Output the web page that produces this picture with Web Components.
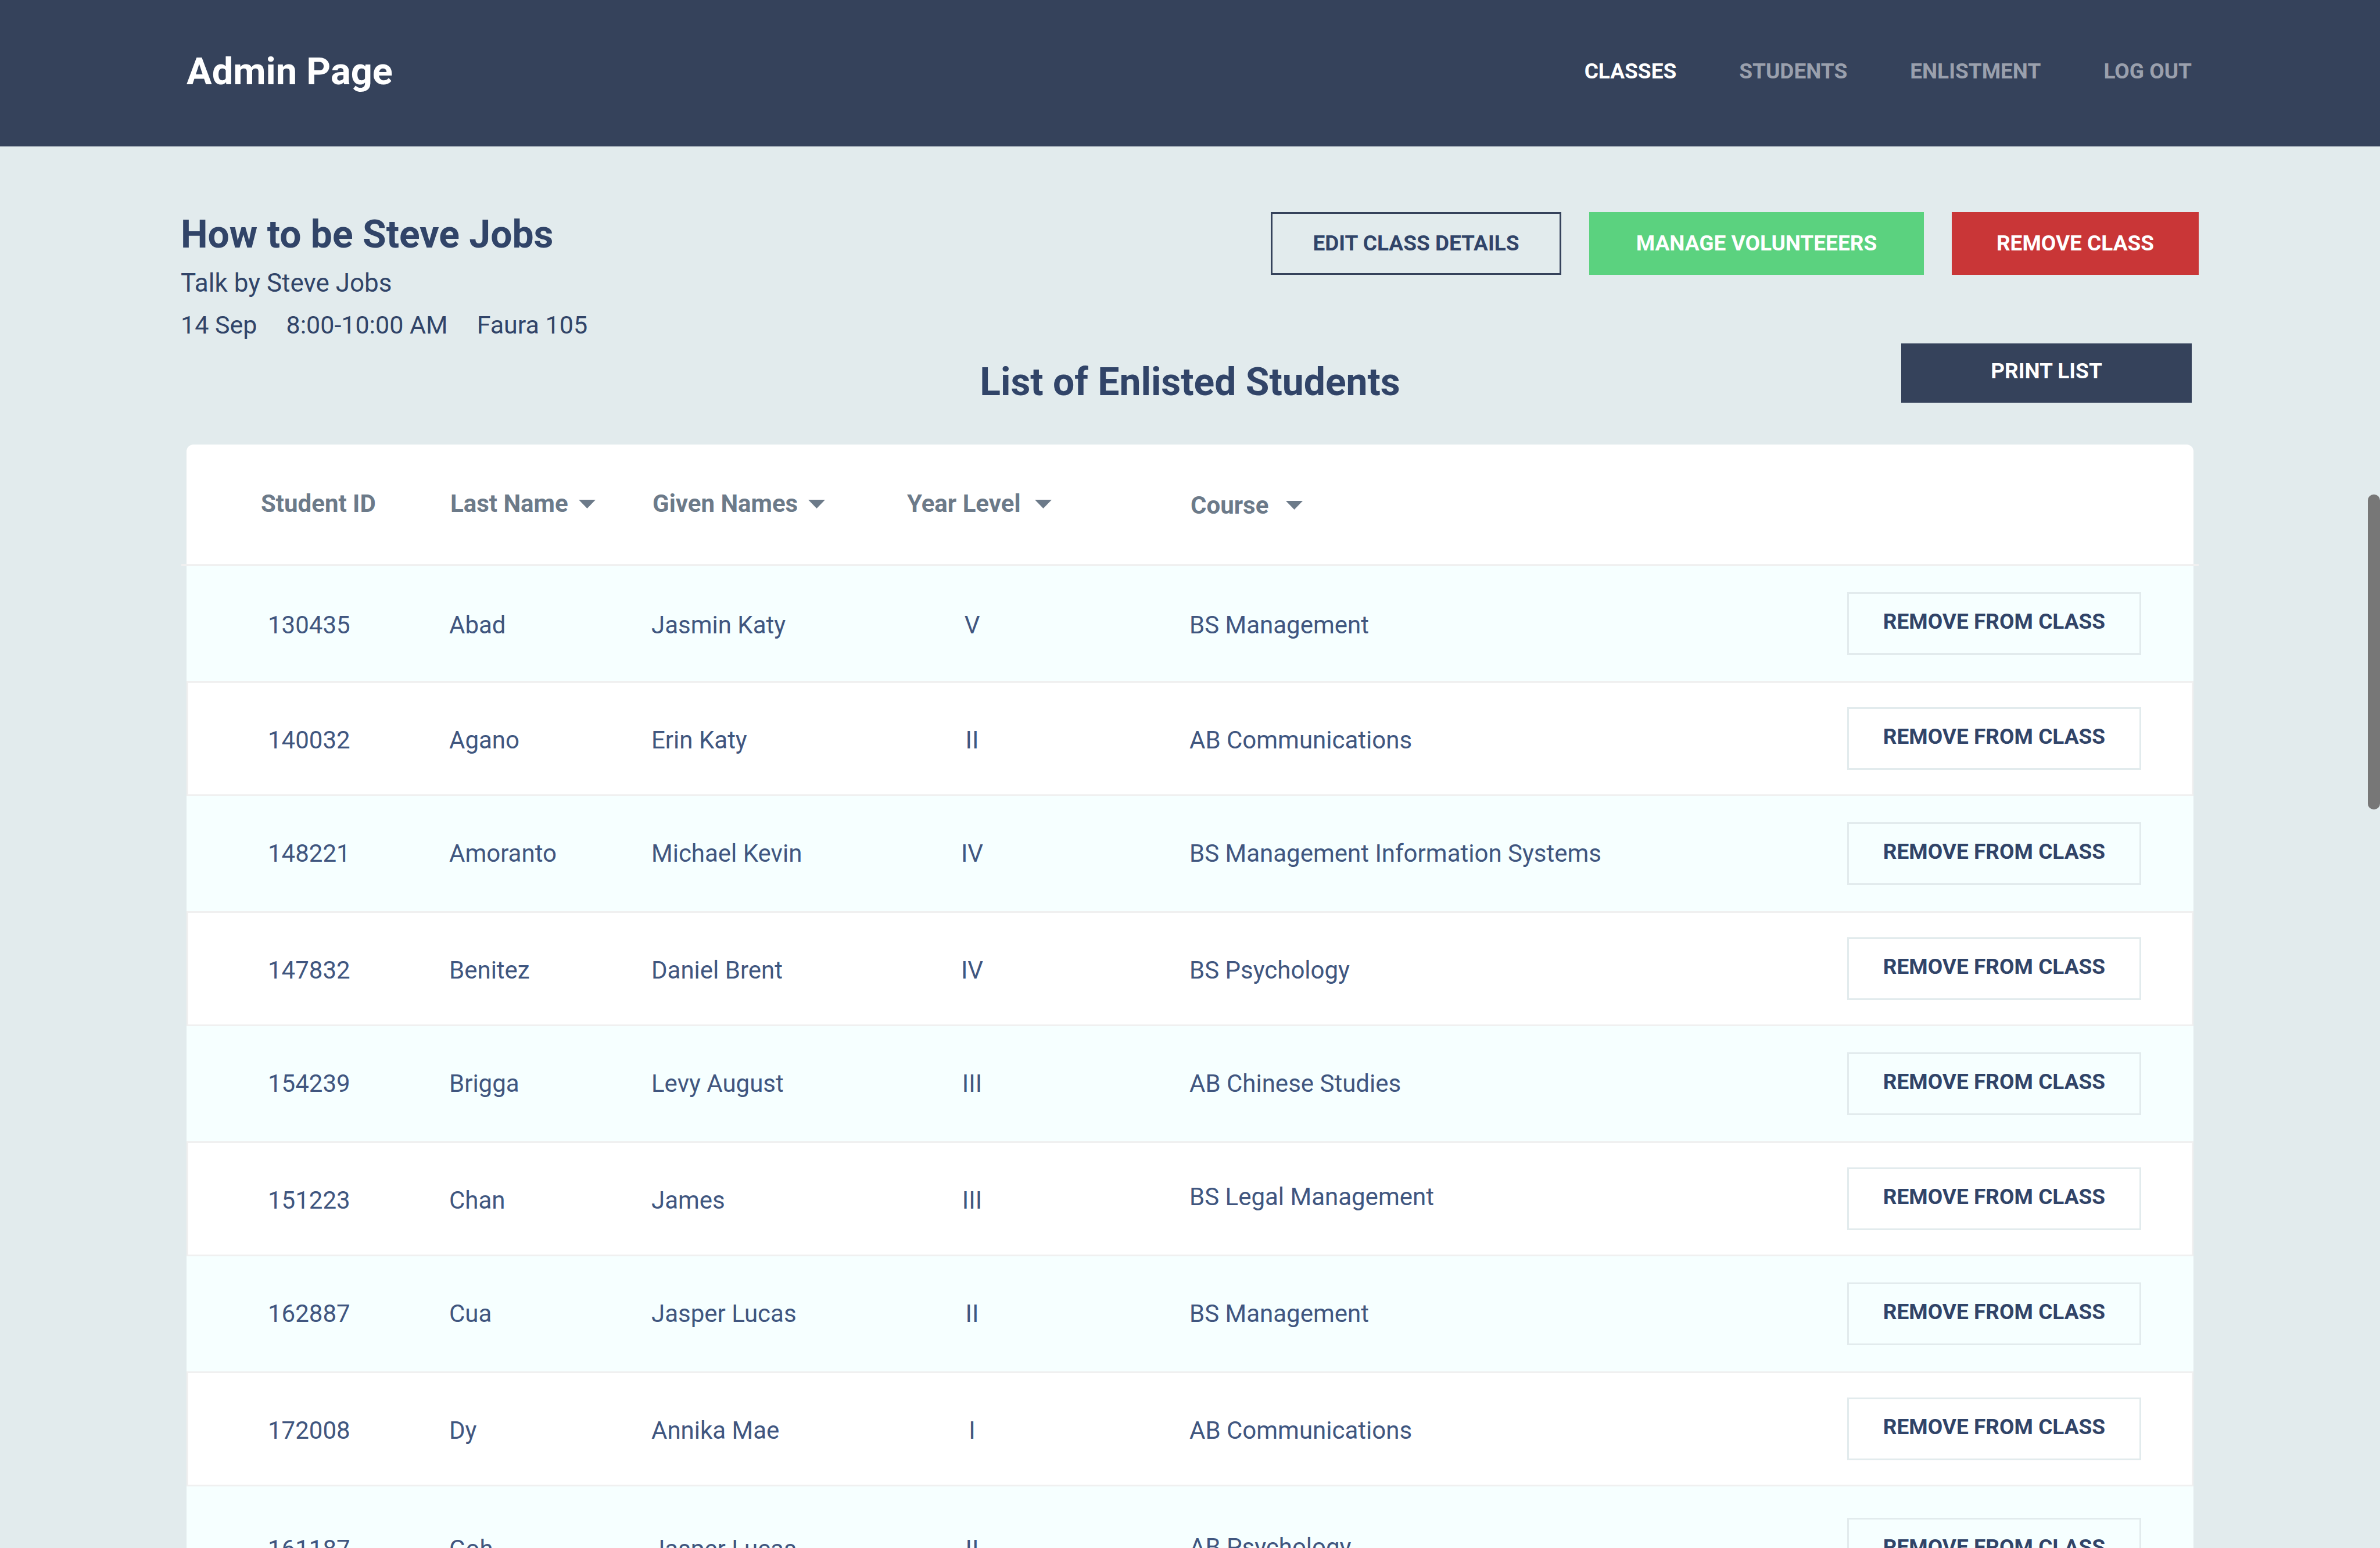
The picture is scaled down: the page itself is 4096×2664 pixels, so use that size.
<!DOCTYPE html>
<html lang="en">
<head>
<meta charset="utf-8">
<title>Admin Page</title>
<style>
  :root {
    --navy: #35425b;
    --ink: #314468;
    --cell: #40567f;
    --muted: #6c7a89;
    --page: #e2ebed;
    --line: #f0f0f0;
    --tint: #f6ffff;
    --green: #5bd27f;
    --red: #c93637;
    scrollbar-width: none;
  }
  body {
    margin: 0;
    background: var(--page);
    color: var(--ink);
    font-family: Roboto, "Liberation Sans", sans-serif;
    font-size: 42px;
  }
</style>
</head>
<body>
<admin-header>
  <span slot="brand">Admin Page</span>
  <nav-link active>CLASSES</nav-link>
  <nav-link>STUDENTS</nav-link>
  <nav-link>ENLISTMENT</nav-link>
  <nav-link>LOG OUT</nav-link>
</admin-header>
<main>
  <class-summary>
    <span slot="title">How to be Steve Jobs</span>
    <span slot="speaker">Talk by Steve Jobs</span>
    <span slot="when">14 Sep</span>
    <span slot="when">8:00-10:00 AM</span>
    <span slot="when">Faura 105</span>
    <action-button slot="actions" kind="outline">EDIT CLASS DETAILS</action-button>
    <action-button slot="actions" kind="go">MANAGE VOLUNTEEERS</action-button>
    <action-button slot="actions" kind="danger">REMOVE CLASS</action-button>
  </class-summary>
  <list-heading>
    <span slot="title">List of Enlisted Students</span>
    <action-button kind="solid">PRINT LIST</action-button>
  </list-heading>
  <student-table></student-table>
</main>
<scroll-thumb></scroll-thumb>

<script>
  const define = (name, html, setup) => {
    const template = document.createElement('template');
    template.innerHTML = html;
    customElements.define(name, class extends HTMLElement {
      constructor() {
        super();
        this.attachShadow({ mode: 'open' }).append(template.content.cloneNode(true));
        if (setup) setup(this.shadowRoot);
      }
    });
  };

  define('action-button', `
    <style>
      :host { display: block; }
      button {
        box-sizing: border-box;
        width: 100%;
        height: 108px;
        padding: 0;
        border: 0;
        font: 700 37px/48px Roboto, "Liberation Sans", sans-serif;
        color: #fff;
        white-space: nowrap;
        cursor: pointer;
      }
      :host([kind="outline"]) button { width: 500px; border: 3px solid var(--navy); background: transparent; color: var(--ink); }
      :host([kind="go"]) button { width: 576px; background: var(--green); }
      :host([kind="danger"]) button { width: 425px; background: var(--red); }
      :host([kind="solid"]) button { width: 500px; height: 102px; padding: 0 0 6px; background: var(--navy); }
      :host([kind="quiet"]) button { padding: 0 0 6px; border: 3px solid var(--page); background: transparent; color: var(--ink); }
    </style>
    <button type="button"><slot></slot></button>`);

  define('nav-link', `
    <style>
      :host { display: block; }
      a { display: block; color: rgb(255 255 255 / 50%); font-weight: 700; font-size: 37px; line-height: 48px; text-decoration: none; }
      :host([active]) a { color: #fff; }
    </style>
    <a href="#"><slot></slot></a>`);

  define('admin-header', `
    <style>
      :host { display: block; background: var(--navy); color: #fff; }
      header {
        box-sizing: border-box;
        height: 252px;
        padding: 0 324px 6px 321px;
        display: flex;
        align-items: center;
        justify-content: space-between;
      }
      .brand { font-weight: 700; font-size: 65px; line-height: 78px; }
      nav { display: flex; gap: 108px; }
    </style>
    <header>
      <div class="brand"><slot name="brand"></slot></div>
      <nav aria-label="Main"><slot></slot></nav>
    </header>`);

  define('class-summary', `
    <style>
      :host { display: block; }
      section { display: flex; justify-content: space-between; padding: 113px 312px 0 311px; }
      h1 { margin: 0 0 12px; font-weight: 700; font-size: 66px; line-height: 78px; }
      p { margin: 0 0 8px; font-size: 44px; line-height: 64px; }
      .when { display: flex; gap: 50px; margin: 0; font-size: 43px; }
      .actions { display: flex; gap: 48px; align-items: flex-start; }
    </style>
    <section>
      <div>
        <h1><slot name="title"></slot></h1>
        <p><slot name="speaker"></slot></p>
        <p class="when"><slot name="when"></slot></p>
      </div>
      <div class="actions"><slot name="actions"></slot></div>
    </section>`);

  define('list-heading', `
    <style>
      :host { display: block; }
      div {
        display: grid;
        grid-template-columns: 1fr auto 1fr;
        align-items: start;
        padding: 0 324px 68px;
      }
      h2 { grid-column: 2; margin: 0; padding-top: 28px; font-weight: 700; font-size: 66px; line-height: 78px; }
      ::slotted(action-button) { justify-self: end; }
    </style>
    <div><h2><slot name="title"></slot></h2><slot></slot></div>`);

  const students = [
    ['130435', 'Abad', 'Jasmin Katy', 'V', 'BS Management'],
    ['140032', 'Agano', 'Erin Katy', 'II', 'AB Communications'],
    ['148221', 'Amoranto', 'Michael Kevin', 'IV', 'BS Management Information Systems'],
    ['147832', 'Benitez', 'Daniel Brent', 'IV', 'BS Psychology'],
    ['154239', 'Brigga', 'Levy August', 'III', 'AB Chinese Studies'],
    ['151223', 'Chan', 'James', 'III', 'BS Legal Management'],
    ['162887', 'Cua', 'Jasper Lucas', 'II', 'BS Management'],
    ['172008', 'Dy', 'Annika Mae', 'I', 'AB Communications'],
    ['161187', 'Goh', 'Jasper Lucas', 'II', 'AB Psychology']
  ];

  define('student-table', `
    <style>
      :host { display: block; margin: 0 321px; background: #fff; border-radius: 12px 12px 0 0; }
      table { width: 100%; table-layout: fixed; border-collapse: separate; border-spacing: 0; }
      .id { width: 452px; }
      .last { width: 348px; }
      .given { width: 438px; }
      .year { width: 488px; }
      .course { width: 900px; }
      thead { position: relative; color: var(--muted); }
      thead::after { content: ""; position: absolute; inset: auto -9px 0; height: 3px; background: var(--line); }
      th { box-sizing: border-box; height: 209px; padding: 0 0 5px 2px; font-weight: 700; line-height: 48px; text-align: left; }
      th:first-child { padding-left: 128px; }
      th button { display: flex; align-items: center; gap: 18px; padding: 0; border: 0; background: none; font: inherit; color: inherit; cursor: pointer; }
      th:nth-child(4) button { gap: 24px; }
      th:nth-child(5) { padding-bottom: 0; }
      th:nth-child(5) button { gap: 30px; }
      svg { width: 29px; height: 15px; fill: currentColor; }
      td { box-sizing: border-box; height: 198px; padding: 0; line-height: 48px; color: var(--cell); background: var(--tint); }
      td:first-child { padding-left: 140px; }
      td:nth-child(4) { padding-right: 260px; text-align: center; }
      tr:first-child td, tr:nth-child(even) td { padding-top: 6px; }
      tr:nth-child(even) td { background: #fff; border: solid var(--line); border-width: 3px 0; }
      tr:nth-child(even) td:first-child { border-left-width: 3px; padding-left: 137px; }
      tr:nth-child(n) td:last-child { padding: 0 90px 0 0; }
      tr:nth-child(even) td:last-child { border-right-width: 3px; padding-right: 87px; }
      tr:nth-child(6) td:nth-child(5), tr:nth-child(9) td:nth-child(5) { padding: 0 0 6px; }
      tr:nth-child(9) td { height: 216px; }
      action-button { width: 506px; margin-left: auto; }
    </style>
    <table>
      <colgroup><col class="id"><col class="last"><col class="given"><col class="year"><col class="course"><col></colgroup>
      <thead><tr></tr></thead>
      <tbody></tbody>
    </table>`, root => {
      const arrow = '<svg viewBox="0 0 29 15" aria-hidden="true"><path d="M0 0h29L14.500 15z"/></svg>';
      root.querySelector('thead tr').innerHTML = '<th scope="col">Student ID</th>'
        + ['Last Name', 'Given Names', 'Year Level', 'Course']
          .map(t => `<th scope="col"><button type="button">${t}${arrow}</button></th>`).join('')
        + '<th></th>';
      root.querySelector('tbody').innerHTML = students.map(row =>
        `<tr>${row.map(t => `<td>${t}</td>`).join('')}<td><action-button kind="quiet">REMOVE FROM CLASS</action-button></td></tr>`
      ).join('');
    });

  define('scroll-thumb', `
    <style>
      :host { position: fixed; top: 851px; right: 0; width: 21px; height: 542px; border-radius: 10px; background: #777; }
    </style>`);
</script>
</body>
</html>
